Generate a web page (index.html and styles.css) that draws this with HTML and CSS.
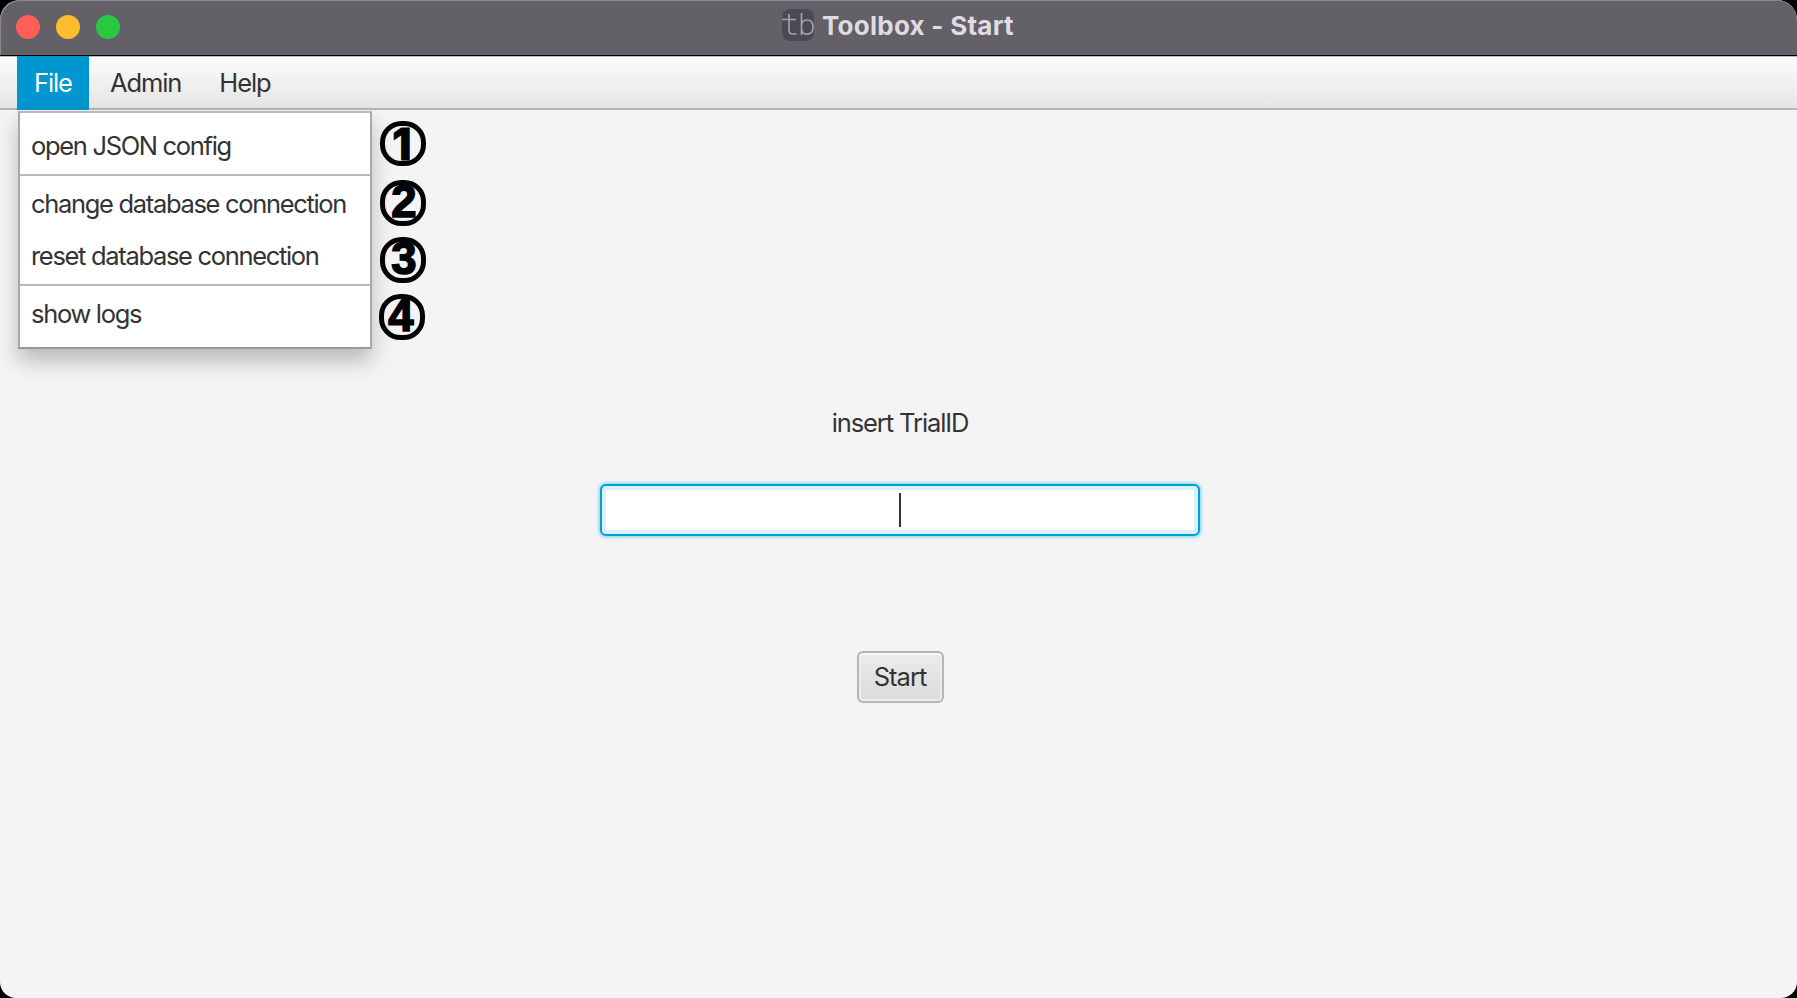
FILE: index.html
```html
<!DOCTYPE html>
<html lang="en">
<head>
<meta charset="utf-8">
<title>Toolbox - Start</title>
<link rel="stylesheet" href="styles.css">
</head>
<body>
<div class="window">
  <header class="titlebar">
    <div class="lights"><i class="light close"></i><i class="light minimize"></i><i class="light maximize"></i></div>
    <div class="title">
      <svg class="logo" width="32" height="32" viewBox="0 0 32 32"><rect width="32" height="32" rx="8" fill="#494a54"/><g fill="none" stroke="#a1a4a9" stroke-width="1.7"><path d="M7 5V21Q7 25 11 25H14.500M0 10.500H14"/><path d="M19.500 4V26M19.500 16C20 9.500 31 8.500 31 18C31 27.500 20 27 19.500 20"/></g></svg>
      <span class="title-text">Toolbox - Start</span>
    </div>
  </header>
  <nav class="menubar">
    <span class="menu active">File</span>
    <span class="menu">Admin</span>
    <span class="menu">Help</span>
  </nav>
  <main class="content">
    <label class="prompt">insert TrialID</label>
    <div class="field"><i class="caret"></i></div>
    <button class="start">Start</button>
  </main>
  <div class="dropdown">
    <div class="item first">open JSON config</div>
    <div class="item second">change database connection</div>
    <div class="item third">reset database connection</div>
    <div class="item fourth">show logs</div>
  </div>
  <span class="mark m1">1</span>
  <span class="mark m2">2</span>
  <span class="mark m3">3</span>
  <span class="mark m4">4</span>
</div>
</body>
</html>
```
FILE: styles.css
```css
* { box-sizing: border-box; }
body { margin: 0; background: #000; font-family: Inter, "Liberation Sans", sans-serif; font-size: 25.5px; line-height: 32px; color: #333; letter-spacing: -1.32px; }
.window { position: relative; width: 1797px; height: 998px; background: #f4f4f4; border-radius: 20px 20px 16px 16px; overflow: hidden; display: flex; flex-direction: column; }
.titlebar { height: 56px; flex: none; background: #636067; border-bottom: 1px solid #000; box-shadow: inset 1px 1px 0 #8b898e; border-radius: 20px 20px 0 0; display: grid; grid-template-columns: 782px 1fr; align-items: start; }
.lights { display: flex; gap: 16px; padding: 15px 0 0 16px; }
.light { width: 24px; height: 24px; border-radius: 50%; }
.close { background: #ff5f57; }
.minimize { background: #febc2e; }
.maximize { background: #28c840; }
.title { display: flex; padding-top: 9px; gap: 8px; }
.title-text { font-size: 26px; line-height: 33px; font-weight: 700; color: #dfdbe3; letter-spacing: 0.25px; white-space: nowrap; }
.menubar { height: 54px; flex: none; display: flex; padding-left: 17px; border-top: 1px solid #b9b9b9; border-bottom: 2px solid #b5b5b5; background: linear-gradient(#fbfbfb, #e5e5e5); }
.menu { height: 54px; margin-top: -1px; padding: 11px 17px 0 21px; white-space: nowrap; letter-spacing: -1.1px; }
.active { width: 72px; padding-left: 17px; color: #fff; background: #0096cf; }
.content { flex: 1; display: flex; flex-direction: column; align-items: center; padding: 297px 0 0 3px; }
.prompt { white-space: nowrap; letter-spacing: -1.1px; }
.field { margin-top: 45px; width: 600px; height: 52px; border: 2px solid #039ed3; border-radius: 6px; box-shadow: 0 0 0 1px #a7dceb, 0 0 0 3px #d1e9f0, inset 0 0 0 4px #d9f1f8; background: #fff; display: flex; justify-content: center; padding-top: 7px; }
.caret { width: 2px; height: 34px; background: #333; }
.start { margin-top: 115px; width: 87px; height: 52px; border: 2px solid #b5b5b5; border-radius: 6px; padding: 0; background: linear-gradient(#ececec, #dadada); box-shadow: inset 0 2px 0 #f8f8f8, inset 0 0 0 2px #ececec; font: inherit; letter-spacing: -1px; color: inherit; }
.dropdown { position: absolute; left: 18px; top: 111px; width: 354px; height: 238px; background: #fff; border: 2px solid; border-color: #b9b9b9 #a8a8a8 #999 #a8a8a8; box-shadow: 0 12px 20px rgba(0,0,0,.24); }
.item { padding-left: 11px; white-space: nowrap; }
.first { height: 63px; padding-top: 17px; border-bottom: 2px solid #b9b9b9; }
.second { height: 56px; padding-top: 12px; }
.third { height: 54px; padding-top: 8px; border-bottom: 2px solid #b9b9b9; }
.fourth { padding-top: 12px; }
.mark { position: absolute; left: 380px; width: 46px; height: 46px; border: 5px solid #030405; border-radius: 21.5px; font: 700 45.5px/34px "Liberation Sans", Arial, sans-serif; letter-spacing: 0; text-align: center; text-indent: 2px; color: #030405; -webkit-text-stroke: 1.6px #030405; }
.m1 { top: 121px; height: 45px; font: 800 44px/37px Inter, sans-serif; text-indent: -2px; -webkit-text-stroke-width: 1px; }
.m2 { top: 180px; }
.m3 { top: 237px; }
.m4 { top: 294px; left: 379px; text-indent: -2px; }
```
